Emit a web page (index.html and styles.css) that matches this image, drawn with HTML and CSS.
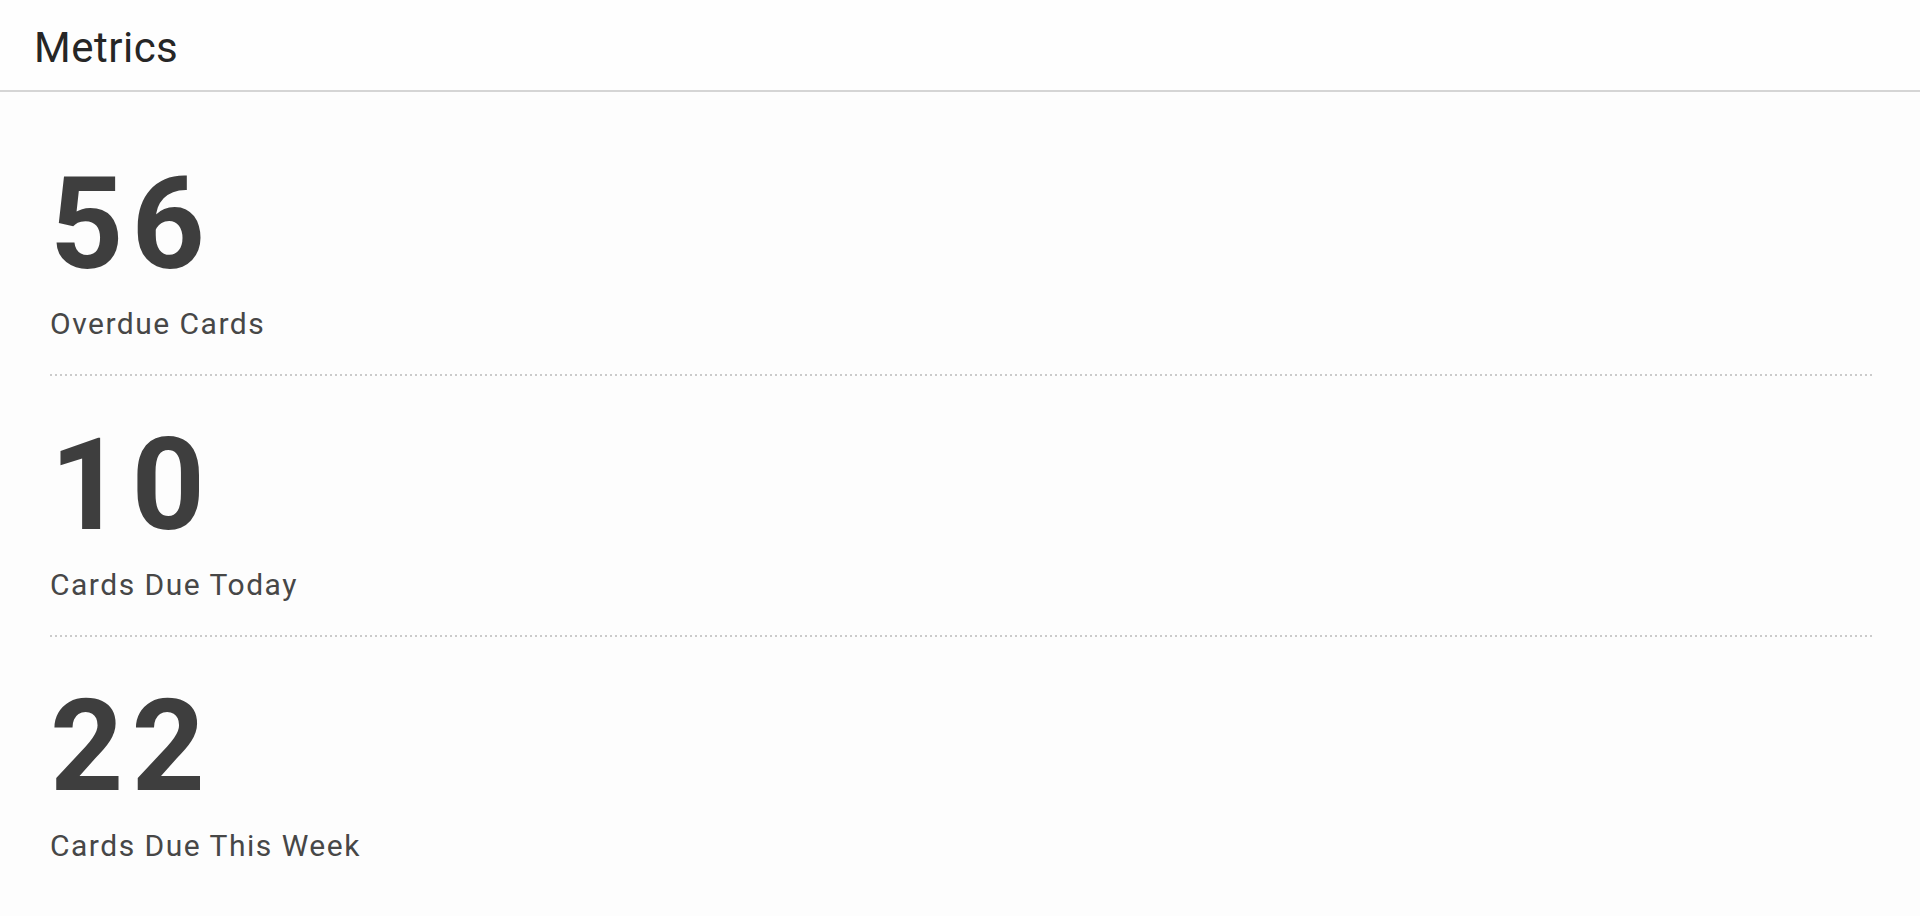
FILE: index.html
```
<!DOCTYPE html>
<html>
<head>
    <title>Metrics</title>
    <link rel="stylesheet" href="styles.css">
</head>
<body>
    <div class="panel">
        <header class="panel-head"><h1>Metrics</h1></header>
        <div class="metrics">
            <div class="metric">
                <div class="metric-value">56</div>
                <div class="metric-label">Overdue Cards</div>
            </div>
            <div class="metric">
                <div class="metric-value">10</div>
                <div class="metric-label">Cards Due Today</div>
            </div>
            <div class="metric">
                <div class="metric-value">22</div>
                <div class="metric-label">Cards Due This Week</div>
            </div>
        </div>
    </div>
</body>
</html>
```

FILE: styles.css
```
html, body {
    margin: 0;
    height: 100%;
}

body {
    background-color: #fdfdfd;
    font-family: Roboto, "Liberation Sans", Arial, sans-serif;
    color: #404040;
}

.panel-head {
    background-color: #fefefe;
    border-bottom: 2px solid #d5d5d5;
    padding: 23px 34px 18px;
}

    .panel-head h1 {
        margin: 0;
        font-size: 42px;
        line-height: 49px;
        font-weight: normal;
        letter-spacing: 0.5px;
        color: #262626;
    }

.metrics {
    padding: 23px 48px 0 50px;
}

.metric {
    padding: 45px 0 32px;
    border-bottom: 2px solid transparent;
    background-image: repeating-linear-gradient(to right, #cbcbcb 0, #cbcbcb 2.5px, transparent 2.5px, transparent 5px);
    background-size: 100% 2px;
    background-position: left bottom;
    background-repeat: no-repeat;
    background-origin: border-box;
}

    .metric:last-child {
        background-image: none;
    }

.metric-value {
    font-size: 128px;
    line-height: 128px;
    font-weight: bold;
    letter-spacing: 8px;
    color: #3e3e3e;
    margin-bottom: 18px;
}

.metric-label {
    font-size: 30px;
    line-height: 36px;
    letter-spacing: 1.5px;
    color: #474747;
}
```
